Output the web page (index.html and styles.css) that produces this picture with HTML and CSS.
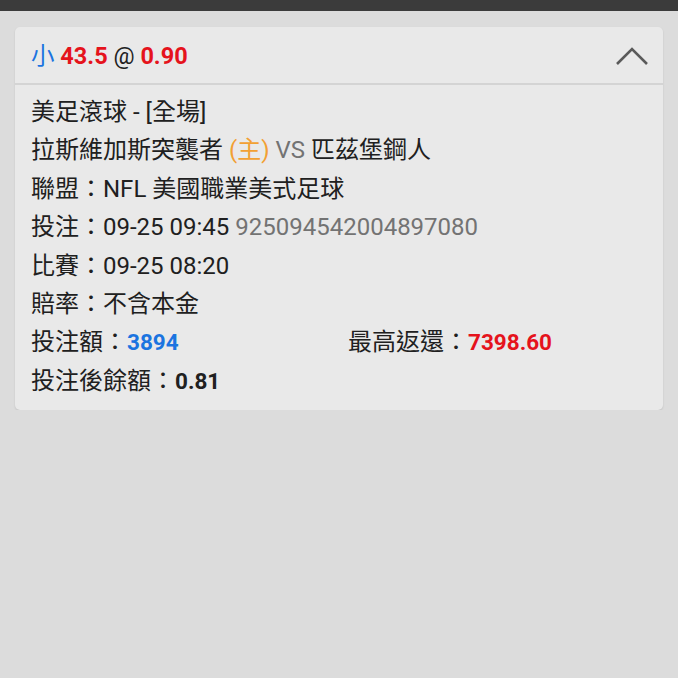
FILE: index.html
```html
<!DOCTYPE html>
<html lang="zh-Hant">
<head>
  <meta charset="UTF-8">
  <meta name="viewport" content="width=device-width, initial-scale=1.0">
  <title>注單</title>
  <link rel="stylesheet" href="styles.css">
</head>
<body>
  <div class="topbar"></div>
  <div class="page">
    <div class="card">
      <div class="card-head">
        <div class="bet-title">
          <span class="blue">小</span> <span class="red strong">43.5</span> @ <span class="red strong">0.90</span>
        </div>
        <svg class="chevron" width="34" height="20" viewBox="0 0 34 20">
          <polyline points="2,18 17,3 32,18" fill="none" stroke="#5a5a5a" stroke-width="2.6"/>
        </svg>
      </div>
      <div class="card-body">
        <div class="row">美足滾球 - [全場]</div>
        <div class="row">拉斯維加斯突襲者 <span class="orange">(主)</span> <span class="gray">VS</span> 匹茲堡鋼人</div>
        <div class="row">聯盟：NFL 美國職業美式足球</div>
        <div class="row">投注：09-25 09:45 <span class="gray">925094542004897080</span></div>
        <div class="row">比賽：09-25 08:20</div>
        <div class="row">賠率：不含本金</div>
        <div class="row split">
          <div class="half">投注額：<span class="blue strong">3894</span></div>
          <div class="half">最高返還：<span class="red strong">7398.60</span></div>
        </div>
        <div class="row">投注後餘額：<span class="strong">0.81</span></div>
      </div>
    </div>
  </div>
</body>
</html>
```

FILE: styles.css
```css
body {
  margin: 0;
  background: #dcdcdc;
  font-family: Roboto, "Noto Sans CJK TC", sans-serif;
  color: #202020;
}
.topbar {
  height: 11px;
  background: #3b3b3b;
}
.page {
  padding: 16px 15px 0 15px;
}
.card {
  background: #e9e9e9;
  border-radius: 5px;
  box-shadow: 0 1px 2px rgba(0,0,0,0.12);
}
.card-head {
  height: 56px;
  display: flex;
  align-items: center;
  justify-content: space-between;
  padding: 0 14px 0 16px;
  border-bottom: 2px solid #d4d4d4;
}
.bet-title {
  font-size: 23.5px;
  line-height: 30px;
  margin-top: 2px;
  color: #222;
}
.chevron {
  margin-top: 2px;
}
.card-body {
  padding: 8px 16px 10px 16px;
  font-size: 24px;
  line-height: 38.4px;
}
.card-body .strong {
  font-size: 22.5px;
}
.split {
  display: flex;
}
.half {
  flex: 0 0 317px;
}
.strong {
  font-weight: bold;
}
.blue {
  color: #1b74e0;
}
.red {
  color: #e5131c;
}
.orange {
  color: #f2a033;
}
.gray {
  color: #737373;
}
```
